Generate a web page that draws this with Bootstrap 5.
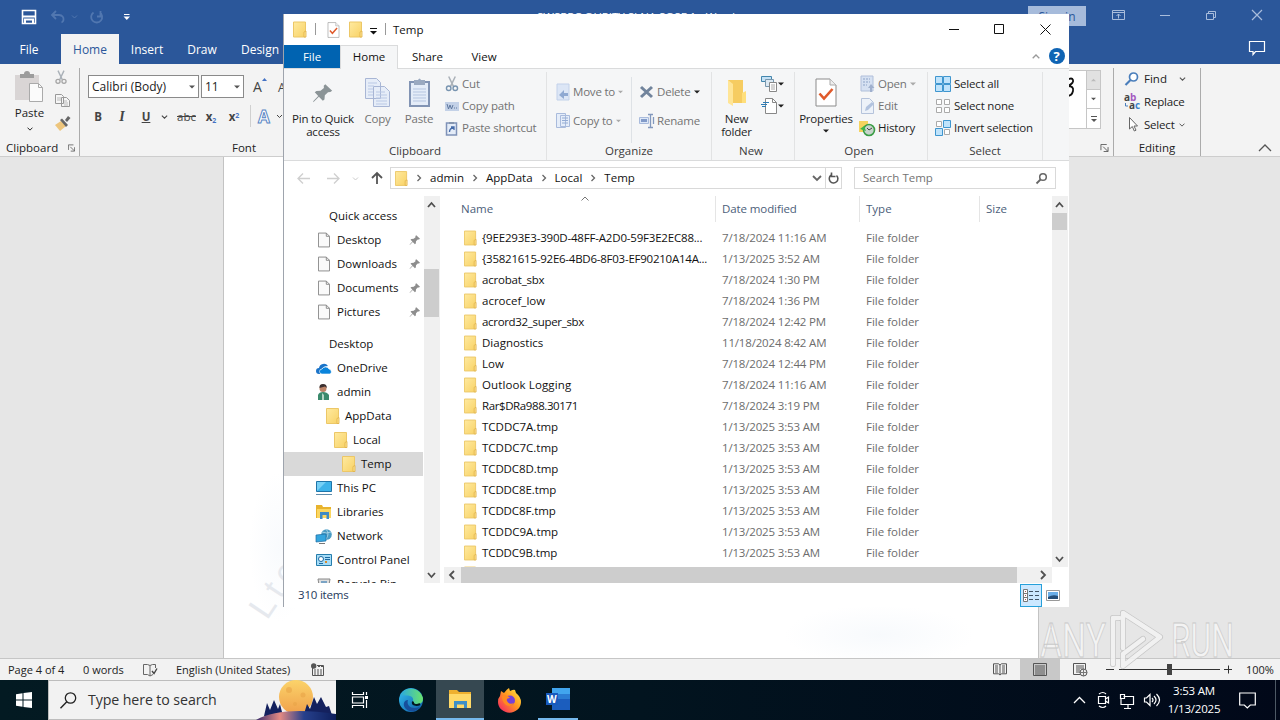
<!DOCTYPE html>
<html lang="en">
    <head>
        <meta charset="UTF-8" />
        <title>Temp</title>
        <!-- Bootstrap CSS -->
        <link href="https://cdn.jsdelivr.net/npm/bootstrap@5.3.0/dist/css/bootstrap.min.css" rel="stylesheet" />
        <style>
            body {
                width: 1280px;
                height: 720px;
                overflow: hidden;
                font: 11.5px/16px "Open Sans", "Noto Sans", sans-serif;
                color: #222;
                background: #e6e6e6;
            }
            svg { display: block; flex: none; overflow: visible; }
            .t { white-space: nowrap; }
            .screen { width: 1280px; height: 720px; }
            .line { fill: none; }
            .line:not([stroke]) { stroke: currentColor; }

            /* Word */
            .w-title { height: 34px; background: #2b579a; color: #fff; }
            .w-docname { width: 210px; margin-left: 404px; }
            .w-sign { width: 58px; height: 20px; margin-left: 281px; margin-top: -2px; background: #a6bbdb; color: #2b579a; font-size: 12px; line-height: 22px; }
            .w-tabs { height: 30px; background: #2b579a; color: #fff; font-size: 12px; }
            .w-tab { height: 30px; text-align: center; line-height: 31px; }
            .w-tab.on { background: #f3f3f3; color: #2b579a; margin-left: 3px; }
            .w-ribbon { height: 93px; background: #f3f3f3; border-bottom: 1px solid #cdcdcd; }
            .w-clip { width: 80px; height: 88px; border-right: 1px solid #ababab; margin-top: 4px; }
            .w-clip-body { height: 72px; }
            .w-font { width: 340px; padding: 7px 0 0 8px; }
            .w-input { height: 23px; border: 1px solid #8a8a8a; background: #fff; line-height: 21px; padding: 0 3px; font-size: 12px; }
            .w-fmt { height: 24px; margin-top: 7px; margin-left: -2px; color: #444; }
            .w-fmt > * { width: 24px; text-align: center; flex: none; }
            .w-fmt sub, .w-fmt sup { color: #4472c4; font-size: 7px; }
            .w-edit { width: 88px; height: 88px; border: solid #ababab; border-width: 0 1px; margin-top: 4px; }
            .w-edit .rowline { height: 23px; padding-left: 11px; gap: 4px; position: relative; top: -1px; }
            .w-scroll { width: 15px; border-left: 1px solid #c6c6c6; }
            .w-styles { width: 35px; height: 59px; margin-top: 6px; border: 1px solid #c6c6c6; background: #fff; }
            .w-scroll > div { height: 20px; border-bottom: 1px solid #c6c6c6; }
            .w-scroll > div:first-child { background: #e1e1e1; }
            .w-doc { height: 501px; background: #e6e6e6; }
            .w-page { width: 816px; margin-left: 223px; background: #fff; border: solid #c3c3c3; border-width: 0 1px; }
            .w-status { height: 22px; background: #f2f2f2; border-top: 1px solid #c6c6c6; line-height: 21px; font-size: 11px; }
            .w-view { width: 40px; height: 21px; margin-left: 13px; background: #c8c8c8; }

            /* Explorer */
            .ex { left: 284px; top: 14px; width: 785px; height: 593px; background: #fff; color: #111; box-shadow: -1px 0 0 #9ea4ad; }
            .ex-title { height: 31px; }
            .ex-tabs { height: 24px; border-bottom: 1px solid #dadbdc; line-height: 24px; }
            .ex-tabs .t { text-align: center; }
            .ex-file { width: 56px; height: 23px; background: #0063b1; color: #fff; }
            .ex-home { width: 58px; height: 24px; background: #f5f6f7; border: 1px solid #dadbdc; border-bottom: 0; line-height: 22px; }
            .ex-ribbon { height: 92px; background: #f5f6f7; border-bottom: 1px solid #dadbdc; color: #1e1e1e; }
            .grp { height: 88px; padding-top: 1px; margin-top: 3px; border-right: 1px solid #e2e3e4; flex: none; }
            .grp-body { height: 70px; letter-spacing: -.2px; }
            .grp-name { text-align: center; line-height: 16px; color: #3b3b3b; }
            .big { text-align: center; line-height: 13px; flex: none; }
            .big .ico { height: 39px; display: flex; align-items: center; justify-content: center; }
            .sm-row { height: 22px; display: flex; align-items: center; gap: 3px; }
            .org .sm-row { height: 29px; }
            .off { color: #737373; }
            .ex-addr { height: 35px; padding-top: 6px; }
            .box { height: 22px; border: 1px solid #d9d9d9; }
            .ex-body { height: 387px; }
            .side { width: 139px; padding-top: 8px; overflow: hidden; flex: none; }
            .side .node { height: 24px; display: flex; align-items: center; gap: 5px; padding-left: 32px; }
            .side .lv1 { padding-left: 42px; }
            .side .lv2 { padding-left: 50px; }
            .side .lv3 { padding-left: 58px; background: #d9d9d9; }
            .side .head { padding-left: 45px; }
            .side .pin { margin-left: auto; margin-right: 2px; }
            .vbar { background: #f0f0f0; color: #505050; width: 16px; flex: none; }
            .thumb { background: #cdcdcd; }
            .cols { height: 26px; line-height: 26px; color: #4c607a; }
            .cols > div { border-right: 1px solid #e5e5e5; flex: none; }
            .files { height: 345px; padding-top: 5px; overflow: hidden; }
            .file { height: 21px; display: flex; align-items: center; color: #6d6d6d; }
            .file .nm { width: 240px; color: #111; }
            .file .dt { width: 144px; letter-spacing: -.17px; }
            .hbar { height: 16px; background: #f0f0f0; width: 608px; color: #505050; }
            .ex-status { height: 24px; color: #1e395b; }
            .view-on { width: 22px; height: 23px; background: #cce8ff; border: 1px solid #26a0da; }

            /* Taskbar */
            .taskbar { height: 40px; background: linear-gradient(90deg, #031a22, #02141f 50%, #010819); color: #fff; }
            .search { width: 288px; height: 40px; background: #f2f2f2; border: 1px solid #bdbdbd; border-right: 0; color: #333; font-size: 14.2px; }
            .tb { width: 48px; height: 40px; margin-right: 1px; display: flex; align-items: center; justify-content: center; }
            .tb.on { background: #364851; border-bottom: 2px solid #76b9ed; }
            .tb.run { border-bottom: 2px solid #76b9ed; width: 40px; margin: 0 4px; }
            .clock { width: 66px; text-align: center; line-height: 18px; letter-spacing: -.2px; }
            .brand { left: 1036px; top: 606px; }
        </style>
    </head>
    <body>
        <!-- Icon sprite -->
        <svg width="0" height="0" class="position-absolute">
            <linearGradient id="gFold" x2="1" y2="1"><stop stop-color="#ffeaa0" /><stop offset="1" stop-color="#f8d266" /></linearGradient>
            <linearGradient id="gEdge" x2="1" y2="1"><stop stop-color="#35c1f1" /><stop offset="1" stop-color="#0c59a4" /></linearGradient>
            <linearGradient id="gEdge2" x2="1"><stop stop-color="#2aa9e0" /><stop offset="1" stop-color="#6be36d" /></linearGradient>
            <linearGradient id="gFox" x1="1" x2="0" y2="1"><stop stop-color="#fff04a" /><stop offset=".45" stop-color="#ff9a1f" /><stop offset="1" stop-color="#f5156c" /></linearGradient>
            <linearGradient id="gMoon" x2="0" y2="1"><stop stop-color="#fbd36a" /><stop offset="1" stop-color="#f0a04b" /></linearGradient>
            <linearGradient id="gHill" x2="1"><stop stop-color="#3a2d6d" /><stop offset=".3" stop-color="#e58a83" /><stop offset=".6" stop-color="#27408c" /><stop offset="1" stop-color="#0d1f5c" /></linearGradient>
            <symbol id="folder" viewBox="0 0 14 16"><path d="M.5.5h12v15H.5z" fill="url(#gFold)" stroke="#ecc767" /><path d="M11 15.500v-5l2-1v6z" fill="#ffe48f" stroke="#dfb048" stroke-width=".8" /></symbol>
            <symbol id="page" viewBox="0 0 13 16"><path d="M.5.5H9L12.500 4v11.500H.5z" fill="#fafafa" stroke="#858585" /><path d="M9 .5V4h3.500" fill="none" stroke="#858585" /></symbol>
            <symbol id="pin" viewBox="0 0 24 24"><path d="M14.500 2.500 22 9.500l-2 1.500-2.500.2-3.500 3.300-.4 4.500-1.800 1.500-4.300-4.300L2 21.500 1 22l.8-1.500 5-5.300L3 11.300l1.800-1.500 4.500-.2L13 6.500l-.2-2.300z" fill="currentColor" /></symbol>
            <symbol id="tri" viewBox="0 0 6 4"><path d="M0 .5h6L3 3.500z" fill="currentColor" /></symbol>
            <symbol id="chev" viewBox="0 0 8 5"><path d="m.7.7 3.300 3.300L7.300.7" fill="none" stroke="currentColor" stroke-width="1.300" /></symbol>
            <symbol id="launch" viewBox="0 0 9 9"><path d="M.5 7V.5H7M3 3l5 5M8.500 3.500v5h-5" fill="none" stroke="#555" /></symbol>
            <symbol id="cut" viewBox="0 0 14 17"><path d="m3.500.5 5 10.500M10.500.5l-5 10.500" fill="none" stroke="#aab1b8" stroke-width="1.600" /><circle cx="3.500" cy="13" r="2.400" fill="none" stroke="currentColor" stroke-width="1.500" /><circle cx="10.500" cy="13" r="2.400" fill="none" stroke="currentColor" stroke-width="1.500" /></symbol>
            <symbol id="check" viewBox="0 0 22 29"><path d="M1 1h14l6 6v21H1z" fill="#fff" stroke="#8b8b8b" /><path d="M15 1v6h6" fill="#eee" stroke="#aaa" /><path d="m4.500 15.500 4.500 5 8.500-9.500" fill="none" stroke="#e05a2b" stroke-width="2.600" /></symbol>
        </svg>

        <div class="screen d-flex flex-column position-relative">
            <!-- Word title bar -->
            <div class="w-title d-flex align-items-center">
                <svg width="133" height="34">
                    <path d="M22.500 10.500h13v13h-13z" fill="none" stroke="#fff" stroke-width="1.600" /><path d="M22 16.500h14M25 24v-4.500h8V24" fill="none" stroke="#fff" stroke-width="2" />
                    <g fill="none" stroke="#5177b0" stroke-width="1.800"><path d="m56 11-4 4 4 4M52.500 15H59q5 .5 4.500 5-.5 2-2 2.500" /><path d="M99.500 12.300a5.500 5.500 0 1 1-6 .2M97 16.500h3.500V11" /></g>
                    <path d="m72 15.500 2.500 2.500 2.500-2.500" fill="none" stroke="#5177b0" />
                    <path d="M124 14.500h5.500" stroke="#fff" /><path d="M123.500 16.500h6.500l-3.200 3.500z" fill="#fff" />
                </svg>
                <span class="w-docname t">SWSRPC QUPITY SI NA SOSF 1 - Word</span>
                <div class="w-sign t text-center">Sign in</div>
                <svg width="194" height="34" fill="none" stroke="#a9bddc">
                    <path d="M26.500 10.500h12v9h-12zM26.500 12.500h12M32.500 18.500v-4.500m-2 2 2-2 2 2" /><path d="M74 15.500h10M120.500 13.500h7v6h-7zM122.500 13.500v-2h7v6h-2" /><path d="m166 10 10 10m0-10-10 10" stroke-width="1.200" />
                </svg>
            </div>
            <div class="w-tabs d-flex">
                <div class="w-tab t" style="width: 58px">File</div>
                <div class="w-tab t on" style="width: 58px">Home</div>
                <div class="w-tab t" style="width: 56px">Insert</div>
                <div class="w-tab t" style="width: 54px">Draw</div>
                <div class="w-tab t" style="width: 62px">Design</div>
                <svg class="ms-auto mt-1" width="31" height="20"><path d="M.5 3.500h15v10h-9L4 16.500v-3H.5z" fill="none" stroke="#fff" stroke-width="1.200" /></svg>
            </div>
            <div class="w-ribbon d-flex">
                <div class="w-clip">
                    <div class="w-clip-body d-flex">
                        <div class="d-flex flex-column align-items-center" style="width: 51px">
                            <svg class="ms-2 mt-1" width="30" height="31"><path d="M0 3h24v25H0z" fill="#d9d5d5" /><path d="M5 6V2h4a3 3 0 0 1 6 0h4v4z" fill="#9c9c9c" /><path d="M14.500 11.500h9l4 4v14h-13z" fill="#fbfbfb" stroke="#aaa" /><path d="M23.500 11.500v4h4" fill="none" stroke="#aaa" /></svg>
                            <span class="t ms-2" style="line-height: 20px">Paste</span>
                            <svg class="ms-2 mt-1" width="6" height="4"><use href="#chev" /></svg>
                        </div>
                        <div class="ms-1" style="padding-top: 2px">
                            <svg width="12" height="15" color="#a5a5a5"><use href="#cut" /></svg>
                            <svg width="16" height="15" class="mt-2"><path d="M.5 1.500h6l2 2v7h-8zM6.500 4.500h5l3 3v6h-8z" fill="#f6f6f6" stroke="#999" /><path d="M2 5h4M2 7h4M9 8h3M9 10h4M9 12h4" stroke="#bbb" /></svg>
                            <svg width="16" height="15" class="mt-2"><path d="m0 9 6-4 5 5-6 5z" fill="#edc57c" /><path d="m5 4 2-1.500L13 9l-2 2zM10 4l3-4 2.500 2L12 6z" fill="#666" /></svg>
                        </div>
                    </div>
                    <div class="d-flex align-items-center"><span class="t flex-grow-1" style="padding-left: 6px">Clipboard</span><svg class="me-1" width="7" height="8"><use href="#launch" /></svg></div>
                </div>
                <div class="w-font">
                    <div class="d-flex mt-1" style="gap: 2px">
                        <div class="w-input t d-flex align-items-center" style="width: 111px">Calibri (Body)<svg class="ms-auto" width="6" height="4" color="#555"><use href="#tri" /></svg></div>
                        <div class="w-input t d-flex align-items-center" style="width: 43px">11<svg class="ms-auto" width="6" height="4" color="#555"><use href="#tri" /></svg></div>
                        <svg width="40" height="23"><text x="7" y="17" font-size="14" fill="#444">A</text><text x="32" y="17" font-size="12" fill="#444">A</text><path d="m16 6 2.500-3L21 6z" fill="#4472c4" /></svg>
                    </div>
                    <div class="w-fmt d-flex align-items-center">
                        <b>B</b><i style="font-family: 'Liberation Serif'; font-weight: bold; font-size: 14px">I</i><b class="text-decoration-underline">U</b>
                        <svg width="6" height="4" style="width: 13px"><use href="#chev" /></svg>
                        <s style="width: 31px">abc</s><b style="width: 18px">x<sub>2</sub></b><b style="width: 28px">x<sup>2</sup></b>
                        <svg width="50" height="24"><path d="M2.500 0v22" stroke="#d0d0d0" /><text x="10" y="18" font-size="17" fill="#fff" stroke="#5a86c5" font-weight="bold">A</text><path d="m29 10 2.500 2.500L34 10" class="line" /></svg>
                    </div>
                    <div class="t" style="margin: 11px 0 0 144px">Font</div>
                </div>
                <div class="d-flex ms-auto">
                    <div class="w-styles d-flex">
                        <svg width="19" height="57"><path d="M0 9q5-3 6 0t-5 6q6 0 5 5-1 5-6 5" fill="none" stroke="#111" stroke-width="1.800" /></svg>
                        <div class="w-scroll flex-fill d-flex flex-column">
                            <div class="d-flex align-items-center justify-content-center"><svg width="5" height="4" color="#bbb" style="transform: rotate(180deg)"><use href="#tri" /></svg></div>
                            <div class="d-flex align-items-center justify-content-center"><svg width="5" height="4" color="#555"><use href="#tri" /></svg></div>
                            <div class="d-flex flex-column align-items-center justify-content-center border-0"><svg width="6" height="6" color="#555"><path d="M0 .5h6" class="line" /><path d="M0 3h6L3 6z" fill="#555" /></svg></div>
                        </div>
                    </div>
                    <svg class="align-self-end mb-1" width="9" height="8" style="margin-left: -1px"><use href="#launch" /></svg>
                    <div class="w-edit ms-1">
                        <div class="rowline d-flex align-items-center"><svg width="15" height="14"><circle cx="8.500" cy="5" r="4" fill="#fff" stroke="#4a7ebb" stroke-width="1.700" /><path d="m5.500 8-5 5" stroke="#4a7ebb" stroke-width="2.200" /></svg><span class="t">Find</span><svg class="ms-2" width="7" height="4" color="#555"><use href="#chev" /></svg></div>
                        <div class="rowline d-flex align-items-center"><svg width="15" height="15"><text x="-1" y="7" font-size="10" font-weight="bold" fill="#444">a<tspan fill="#a45bc0">b</tspan></text><text x="4" y="15" font-size="10" font-weight="bold" fill="#444">a<tspan fill="#3d83cc">c</tspan></text><path d="M.5 9v3H3" class="line" stroke="#4a7ebb" /></svg><span class="t" style="letter-spacing: -.2px">Replace</span></div>
                        <div class="rowline d-flex align-items-center"><svg width="15" height="15"><path d="M4.500.5v11.500l2.800-2.500 2 4.500 1.700-.8-2-4.200h3.500z" fill="#fff" stroke="#666" /></svg><span class="t" style="letter-spacing: -.2px">Select</span><svg width="6" height="4" color="#555"><use href="#chev" /></svg></div>
                        <div class="text-center" style="padding-top: 3px">Editing</div>
                    </div>
                    <div class="d-flex align-items-end justify-content-end" style="width: 79px; padding: 0 8px 4px 0"><svg width="14" height="8"><path d="m1 7 6-6 6 6" class="line" stroke="#555" stroke-width="1.300" /></svg></div>
                </div>
            </div>
            <div class="w-doc d-flex">
                <div class="w-page">
                    <svg width="814" height="501">
                        <defs><radialGradient id="haze"><stop stop-color="#e9f0f8" /><stop offset="1" stop-color="#fff" /></radialGradient></defs>
                        <ellipse cx="55" cy="390" rx="30" ry="75" fill="url(#haze)" opacity=".3" /><ellipse cx="655" cy="478" rx="95" ry="30" fill="url(#haze)" opacity=".35" />
                        <text transform="translate(43 464) rotate(-56)" font-family="Liberation Sans" font-size="35" letter-spacing="6" fill="#e6e9ee">Lte</text>
                    </svg>
                </div>
            </div>
            <div class="w-status d-flex align-items-center">
                <span class="t" style="width: 75px; padding-left: 8px">Page 4 of 4</span><span class="t ps-2" style="width: 68px">0 words</span>
                <svg width="15" height="14"><path d="M.5 1.500h4l2.500 1 2.500-1h3V5M.5 1.500v10h4l2.500 1.500V2.500M7 13l3-1.500" class="line" stroke="#666" /><path d="m9 8 2 2.500 3-5" class="line" stroke="#444" stroke-width="1.400" /></svg>
                <span class="t" style="margin-left: 18px; width: 135px">English (United States)</span>
                <svg width="14" height="14"><path d="M1.500 5v7.500h11V2.500H6" class="line" stroke="#555" /><path d="M7 3.500h5M3 7h9M3 9h9M3 11h9" stroke="#555" stroke-dasharray="2 1" /><circle cx="2.700" cy="3" r="2.700" fill="#555" /></svg>
                <div class="d-flex align-items-center h-100" style="margin-left: 668px">
                    <svg width="14" height="13"><path d="M7 2 5.500.8H.5v10h5L7 12l1.500-1.200h5v-10h-5zM7 2v10M2 3h3M2 5h3M2 7h3M9 3h3M9 5h3M9 7h3M2 9h3M9 9h3" class="line" stroke="#555" /></svg>
                    <div class="w-view d-flex align-items-center justify-content-center"><svg width="14" height="13"><path d="M.5.5h13v12H.5zM2 3h10M2 5h10M2 7h10M2 9h10M2 11h10" class="line" stroke="#555" /></svg></div>
                    <svg style="margin-left: 13px" width="16" height="14"><path d="M12.500 6V.5H.5v11H7M3 3h8M3 5h8M3 7h4M3 9h4" class="line" stroke="#555" /><circle cx="10.500" cy="9.500" r="3.500" fill="#eee" stroke="#555" /><path d="M7 9.500h7M10.500 6v7" stroke="#777" /></svg>
                    <svg style="margin-left: 17px" width="126" height="13"><path d="M0 6.500h8M13 6.500h101M118 6.500h8M122.500 2.500v8" class="line" stroke="#333" /><path d="M61 1h5v11h-5z" fill="#444" /></svg>
                    <span class="t" style="margin-left: 14px">100%</span>
                </div>
            </div>

            <!-- Taskbar -->
            <div class="taskbar d-flex">
                <div class="tb m-0"><svg width="16" height="16"><path d="m0 2.200 6.500-.9v6.200H0zM7.500 1.100 16 0v7.500H7.500zM0 8.500h6.500v6.200L0 13.800zM7.500 8.500H16V16l-8.500-1.100z" fill="#fff" /></svg></div>
                <div class="search d-flex align-items-center">
                    <svg style="margin-left: 11px" width="17" height="17"><circle cx="10.500" cy="6" r="5.200" class="line" stroke="#222" stroke-width="1.300" /><path d="M6.800 9.700.5 16.200" stroke="#222" stroke-width="1.400" /></svg>
                    <span class="t" style="margin-left: 11px; letter-spacing: -.1px">Type here to search</span>
                    <svg class="ms-auto" width="80" height="38">
                        <circle cx="40" cy="16" r="17" fill="url(#gMoon)" /><g fill="#e9a548" opacity=".6"><circle cx="33" cy="9" r="3" /><circle cx="47" cy="14" r="2.500" /><circle cx="39" cy="23" r="2" /></g>
                        <path d="m8 35 3-13 3 7 4-10 4 9 2-5 3 12zM48 33l3-10 3 5 4-12 3 7 4-7 5 10 3-1 3 9z" fill="#14215e" />
                        <path d="M0 39q25-14 80-6v6z" fill="url(#gHill)" />
                    </svg>
                </div>
                <div class="tb"><svg width="16" height="16"><path d="M.5 0v2.500h11V0M.5 5h11v6H.5zM.5 16v-2.500h11V16M14.500 0v3M14.500 8v8" class="line" stroke-width="1.200" /><path d="M13 4h3v3h-3z" fill="#fff" /></svg></div>
                <div class="tb m-0" style="width: 51px"><svg width="24" height="24"><circle cx="12" cy="12" r="12" fill="url(#gEdge)" /><path d="M1 8C4-1 20-3 24 10q.5 6-7 6.500-4 0-3-3c1-4-2-6-6-6Q3 7 1 8z" fill="url(#gEdge2)" /><path d="M9 12c-2 6 4 10 12 7-4 5-10 6-14 2s-2-9 2-9z" fill="#174f9b" /><path d="M14 13.500c-1 3 3 4.500 7 2.500" fill="none" stroke="#021720" stroke-width="2" /></svg></div>
                <div class="tb on"><svg width="22" height="19"><path d="M0 0h8l2 2h12v16H0z" fill="#eeb02f" /><path d="M0 4h22v14H0z" fill="#ffd968" /><path d="M5 18v-7h13v7h-3v-3.500H8V18z" fill="#3e8fc7" /></svg></div>
                <div class="tb"><svg width="23" height="24"><path d="M2 8 3 3l3 2q3-4 5-5l1 3q4-2 5-1l1 3q5 4 5 9a11.300 10.500 0 0 1-23 0q0-4 2-6z" fill="url(#gFox)" /><circle cx="12" cy="12.500" r="5" fill="#7542d8" /><path d="M4 8q5-2 8 2-4 0-3 3 2 4 7 2-3 5-8 2-4-3-4-9z" fill="#ff8a20" /></svg></div>
                <div class="tb run"><svg width="24" height="22"><path d="M6 0h18v22H6z" fill="#1b5dbe" /><path d="M6 0h18v6H6z" fill="#41a5ee" /><path d="M6 6h18v5H6z" fill="#2b7cd3" /><path d="M0 5h12v12H0z" fill="#185abd" /><text x="1" y="14.500" fill="#fff" font-size="10" font-weight="bold">W</text></svg></div>
                <div class="d-flex align-items-center ms-auto">
                    <svg width="88" height="20" fill="none" stroke="#fff"><path d="m1 13 5.500-5.500L12 13" stroke-width="1.300" /><path d="M25.500 6.500h7v7h-7zM32.500 9l3-2v6l-3-2M26 4q4-3 7 0M26 16q4 3 7 0" stroke-width="1.200" /><path d="M50.500 6.500h10v8h-12M55 15v3M51 18.500h7M47.500 4.500h4v4h-4zM48 9v6" stroke-width="1.200" /><path d="M71.500 8h2l3.500-3.500v11L73.500 12h-2zM79 8q2 2 0 4M81 6q4 4 0 8M83.500 4q6 6 0 12" stroke-width="1.200" /></svg>
                    <div class="clock t">3:53 AM<br />1/13/2025</div>
                    <svg style="margin: 0 18px 0 12px" width="17" height="17"><path d="M.7 1h15.600v12h-5l-3 3-3-3H.7z" class="line" stroke-width="1.200" /></svg>
                    <svg width="6" height="40"><path d="M1.500 0v40" stroke="#4d5965" /></svg>
                </div>
            </div>

            <!-- Explorer window -->
            <div class="ex position-absolute d-flex flex-column">
                <div class="ex-title d-flex align-items-center">
                    <svg width="105" height="31"><use href="#folder" x="9" y="7" width="14" height="17" /><path d="M31.500 9v12M101.500 9v12" stroke="#999" /><use href="#check" x="43" y="8" width="13" height="16" /><use href="#folder" x="65" y="7" width="14" height="17" /><path d="M86 14.500h7" stroke="#111" /><path d="M86 17h7l-3.500 3.500z" fill="#111" /></svg>
                    <span class="t ms-1">Temp</span>
                    <svg class="ms-auto" width="122" height="31" fill="none" stroke="#111"><path d="M2 15.500h10M47.500 10.500h9v9h-9zM93.500 10.500l10 10m0-10-10 10" /></svg>
                </div>
                <div class="ex-tabs d-flex">
                    <div class="ex-file t">File</div><div class="ex-home t">Home</div><div class="t" style="width: 59px">Share</div><div class="t" style="width: 54px">View</div>
                    <div class="ms-auto d-flex align-items-center" style="margin-right: 4px"><svg width="8" height="5" color="#999" style="transform: rotate(180deg)"><use href="#chev" /></svg><svg class="ms-2" width="17" height="17"><circle cx="9" cy="8" r="8" fill="#0f64b4" /><text x="5.500" y="13" fill="#fff" font-size="13" font-weight="bold">?</text></svg></div>
                </div>
                <div class="ex-ribbon d-flex">
                    <div class="grp" style="width: 263px">
                        <div class="grp-body d-flex">
                            <div class="big" style="width: 78px"><div class="ico"><svg width="22" height="22" color="#8b9497"><use href="#pin" /></svg></div>Pin to Quick<br />access</div>
                            <div class="big off" style="width: 31px"><div class="ico"><svg width="25" height="29"><path d="M.5.5h11l4 4v16H.5zM8.500 8.500h11l5 5v15h-16z" fill="#e6edf8" stroke="#a8b6d5" /><path d="M3 5h9M3 8h6M3 11h5M3 14h5M3 17h5M11 14h9M11 17h11M11 20h11M11 23h11M11 26h11" stroke="#bac9e5" /></svg></div>Copy</div>
                            <div class="big off" style="width: 52px"><div class="ico"><svg width="21" height="29"><path d="M1 4h19v24H1z" fill="#e4ecf8" stroke="#8294b4" stroke-width="2" /><path d="M5 2h4q1.500-3 3 0h4v5H5z" fill="#9aa9c0" /><path d="M4 11h13M4 14h13M4 17h13M4 20h13M4 23h13" stroke="#b5c5e0" /></svg></div>Paste</div>
                            <div class="off ms-auto" style="width: 101px">
                                <div class="sm-row"><svg width="14" height="16" color="#7894b0"><use href="#cut" /></svg><span class="t">Cut</span></div>
                                <div class="sm-row"><svg width="14" height="9"><path d="M0 0h14v9H0z" fill="#c3d1e7" /><path d="m2 2 1.500 5L5 3l1.500 4L8 3M9 6h1m1 0h1" class="line" stroke="#5f789f" /></svg><span class="t">Copy path</span></div>
                                <div class="sm-row"><svg width="14" height="15"><path d="M1.500 2h10v12h-10z" fill="#e4ecf8" stroke="#7f92b8" stroke-width="1.500" /><path d="M4 1h5v2H4z" fill="#8595ae" /><path d="M4.500 11q0-4 4-4M6 6h3v3" class="line" stroke="#456ba9" stroke-width="1.300" /></svg><span class="t">Paste shortcut</span></div>
                            </div>
                        </div>
                        <div class="grp-name">Clipboard</div>
                    </div>
                    <div class="grp org" style="width: 165px">
                        <div class="grp-body d-flex off pt-1">
                            <div class="flex-shrink-0" style="width: 84px; padding-left: 9px">
                                <div class="sm-row"><svg width="14" height="16"><path d="M1 0h12v16H1z" fill="#dce6f6" stroke="#c2d1ea" /><path d="M12 9H8V6l-5 5 5 4v-3h4z" fill="#8fa9d2" /></svg><span class="t">Move to</span><svg width="5" height="4" color="#aaa"><use href="#tri" /></svg></div>
                                <div class="sm-row"><svg width="14" height="16"><path d="M.5.5h9v14h-9zM4.500 2.500h9v11h-9z" fill="#e5edf9" stroke="#a9bbdc" /><path d="M6 5h6M6 7.500h6M6 10h6" stroke="#94acd4" /></svg><span class="t">Copy to</span><svg width="5" height="4" color="#aaa"><use href="#tri" /></svg></div>
                            </div>
                            <div class="border-start" style="padding-left: 7px">
                                <div class="sm-row"><svg width="15" height="14"><path d="m2 2 11 10M13 2 2 12" stroke="#71849c" stroke-width="3" /></svg><span class="t">Delete</span><svg width="6" height="4" color="#222"><use href="#tri" /></svg></div>
                                <div class="sm-row"><svg width="15" height="14"><path d="M.5 3.500h9v6h-9z" fill="#dce7f7" stroke="#a9bbdc" /><path d="M2 6.500h6" stroke="#829bc9" stroke-width="3" /><path d="M9 .5h5M11.500 1v12M9 13.500h5M14.500 3v7" class="line" stroke="#8298bd" stroke-width="1.300" /></svg><span class="t">Rename</span></div>
                            </div>
                        </div>
                        <div class="grp-name">Organize</div>
                    </div>
                    <div class="grp" style="width: 83px">
                        <div class="grp-body d-flex">
                            <div class="big" style="width: 49px"><div class="ico"><svg width="20" height="27"><path d="M1 1h15v23H1z" fill="#f6cc61" /><path d="m1 1 5 4v22l-5-3z" fill="#ffe596" /><path d="M15 24V14l4-2v12z" fill="#ffdf7b" /></svg></div>New<br />folder</div>
                            <div>
                                <div class="sm-row gap-0"><svg width="17" height="16"><path d="M.5.5h10v5H.5z" fill="#c5e1f5" stroke="#4386ad" /><path d="M4.500 3.500h8v7h-8z" fill="#dce9f3" stroke="#7897ad" /><path d="M8.500 6.500h7v9h-7z" fill="#fff" stroke="#888" /><path d="M10 9h4M10 11h4M10 13h4" stroke="#aaa" /></svg><svg width="6" height="4"><use href="#tri" /></svg></div>
                                <div class="sm-row gap-0"><svg width="17" height="16"><path d="M4.500.5h7l4 4v11h-11z" fill="#fff" stroke="#888" /><path d="M11.500.5v4h4" fill="none" stroke="#888" /><path d="M2 4.500h6M0 6.500h6M1 8.500h4" stroke="#2d7cb5" /></svg><svg width="6" height="4"><use href="#tri" /></svg></div>
                            </div>
                        </div>
                        <div class="grp-name pe-1">New</div>
                    </div>
                    <div class="grp" style="width: 133px">
                        <div class="grp-body d-flex">
                            <div class="big" style="width: 62px"><div class="ico"><svg width="22" height="29"><use href="#check" /></svg></div>Properties<svg class="mx-auto mt-1" width="6" height="4"><use href="#tri" /></svg></div>
                            <div style="padding-left: 3px">
                                <div class="sm-row off"><svg width="15" height="16"><path d="M1 0h12v15H1z" fill="#d6e1f2" stroke="#b0bfda" /><path d="M3 3h7M3 6h7M3 9h4" stroke="#8da3c7" stroke-dasharray="2 1" /><path d="m11 8 3.500 4H12v4h-2v-4H8z" fill="#a0b0cd" /></svg><span class="t">Open</span><svg width="6" height="4" color="#aaa"><use href="#tri" /></svg></div>
                                <div class="sm-row off"><svg width="15" height="16"><path d="M1.500.5h8l4 4v11h-12z" fill="#edf2f9" stroke="#b5c3db" /><path d="m5 13 1-4 6-5 2 2-6 6z" fill="#b2c3df" /></svg><span class="t">Edit</span></div>
                                <div class="sm-row"><svg width="15" height="16"><path d="M-1 1H8v11h-9z" fill="#f4d35e" /><circle cx="9" cy="10" r="5.500" fill="#c7d4cc" stroke="#3b9d46" stroke-width="1.600" /><path d="m7 8 2 2 3-2" class="line" stroke="#444" /><path d="m0 9 4-3 2 5z" fill="#3cb54a" /></svg><span class="t">History</span></div>
                            </div>
                        </div>
                        <div class="grp-name pe-1">Open</div>
                    </div>
                    <div class="grp" style="width: 115px">
                        <div class="grp-body" style="padding-left: 7px">
                            <div class="sm-row"><svg width="16" height="16" fill="#bfe3fb" stroke="#3f96cf"><path d="M.5.5h7v7h-7zM8.500.5h7v7h-7zM.5 8.500h7v7h-7zM8.500 8.500h7v7h-7z" /></svg><span class="t">Select all</span></div>
                            <div class="sm-row"><svg width="16" height="16" fill="#fff" stroke="#aaa"><path d="M1.500 1.500h5v5h-5zM9.500 1.500h5v5h-5zM1.500 9.500h5v5h-5zM9.500 9.500h5v5h-5z" /></svg><span class="t">Select none</span></div>
                            <div class="sm-row"><svg width="16" height="16"><path d="M1.500 1.500h5v5h-5zM9.500 9.500h5v5h-5z" fill="#fff" stroke="#aaa" /><path d="M8.500.5h7v7h-7zM.5 8.500h7v7h-7z" fill="#bfe3fb" stroke="#3f96cf" /></svg><span class="t">Invert selection</span></div>
                        </div>
                        <div class="grp-name">Select</div>
                    </div>
                </div>
                <div class="ex-addr d-flex">
                    <svg width="106" height="22"><path d="M14 11.500h12M19 6.500l-5 5 5 5M43 11.500h12M50 6.500l5 5-5 5" class="line" stroke="#cfcfcf" stroke-width="1.300" /><path d="m69 10.500 2.500 2.500 2.500-2.500" class="line" stroke="#ccc" /><path d="M93 17V6M88 11l5-5 5 5" class="line" stroke="#555" stroke-width="1.800" /></svg>
                    <div class="box d-flex align-items-center" style="width: 452px" id="crumbs">
                        <svg class="ms-1" width="13" height="17"><use href="#folder" /></svg>
                    </div>
                    <div class="box d-flex align-items-center off" style="width: 202px; margin-left: 12px"><span class="t ms-2">Search Temp</span><svg class="ms-auto me-2" width="11" height="11"><circle cx="7" cy="4" r="3.300" class="line" stroke="#666" stroke-width="1.500" /><path d="M4.500 6.500.5 10.500" stroke="#666" stroke-width="1.800" /></svg></div>
                </div>
                <div class="ex-body d-flex">
                    <div class="side" id="side"></div>
                    <div class="vbar d-flex flex-column align-items-center" style="margin-left: 1px">
                        <svg width="16" height="73"><path d="m4 11 3.500-4 3.500 4" class="line" stroke-width="1.800" /></svg>
                        <div class="thumb align-self-start" style="height: 48px; width: 15px"></div>
                        <svg class="mt-auto" width="16" height="16"><path d="m4 6 3.500 4L11 6" class="line" stroke-width="1.800" /></svg>
                    </div>
                    <div class="d-flex flex-column" style="margin-left: 4px; width: 608px">
                        <div class="cols d-flex">
                            <div class="d-flex" style="width: 272px; padding-left: 17px">Name<svg style="margin-left: 88px" width="8" height="8"><path d="m.5 4.500 3.500-3.500L7.500 4.500" class="line" stroke="#777" /></svg></div>
                            <div style="width: 144px; padding-left: 6px; letter-spacing: -.1px">Date modified</div>
                            <div style="width: 120px; padding-left: 6px">Type</div>
                            <div class="border-0" style="padding-left: 6px">Size</div>
                        </div>
                        <div class="files" id="files"></div>
                        <div class="hbar d-flex align-items-center">
                            <svg width="17" height="16"><path d="m10 4-4 4 4 4" class="line" stroke-width="1.800" /></svg><div class="thumb h-100" style="width: 556px"></div><svg class="ms-auto" width="17" height="16"><path d="m6 4 4 4-4 4" class="line" stroke-width="1.800" /></svg>
                        </div>
                    </div>
                    <div class="vbar d-flex flex-column" style="height: 371px">
                        <svg width="16" height="17"><path d="m4 11 3.500-4 3.500 4" class="line" stroke-width="1.800" /></svg>
                        <div class="thumb" style="height: 17px; width: 15px"></div>
                        <svg class="mt-auto" width="16" height="16"><path d="m4 6 3.500 4L11 6" class="line" stroke-width="1.800" /></svg>
                    </div>
                </div>
                <div class="ex-status d-flex align-items-center">
                    <span class="t flex-grow-1" style="padding-left: 14px; letter-spacing: -.2px">310 items</span>
                    <div class="view-on d-flex align-items-center justify-content-center"><svg width="16" height="13"><path d="M.5.5h4v12h-4zM.5 4.500h4M.5 8.500h4" fill="#fff" stroke="#777" /><path d="M2 2.500h1M2 6.500h1M2 10.500h1" stroke="#a55" /><path d="M6 2.500h4M12 2.500h4M6 6.500h4M12 6.500h4M6 10.500h4M12 10.500h4" stroke="#456" /></svg></div>
                    <svg class="ms-1" style="margin-right: 9px" width="14" height="11"><path d="M.5.5h13v10H.5z" fill="#fff" stroke="#999" /><path d="M2 2h10v7H2z" fill="#6aaee8" /><path d="M2 7q5-3 10-1v3H2z" fill="#254e78" /></svg>
                </div>
            </div>

            <!-- Watermark -->
            <svg class="brand position-absolute" width="200" height="68" opacity=".85">
                <g font-family="Roboto" font-weight="400" font-size="48" fill="#f6f6f6" stroke="#c4c4c4" stroke-width=".8">
                    <text x="4" y="51" textLength="66" lengthAdjust="spacingAndGlyphs">ANY</text>
                    <text x="135" y="51" textLength="63" lengthAdjust="spacingAndGlyphs">RUN</text>
                </g>
                <g fill="none" stroke-linejoin="round" stroke-linecap="round"><path d="M87 42V7l37 24-37 29V48l20-15M77 13v45M83 12h-6" stroke="#c0c0c0" stroke-width="6" /><path d="M87 42V7l37 24-37 29V48l20-15M77 13v45M83 12h-6" stroke="#f4f4f4" stroke-width="4.500" /></g>
            </svg>
        </div>

        <!-- Bootstrap JS -->
        <script src="https://cdn.jsdelivr.net/npm/bootstrap@5.3.0/dist/js/bootstrap.bundle.min.js"></script>

        <!-- Main Script -->
        <script>
            // name, date, letter spacing of the name
            const files = [
                ["{9EE293E3-390D-48FF-A2D0-59F3E2EC88...", "7/18/2024 11:16 AM", -0.19],
                ["{35821615-92E6-4BD6-8F03-EF90210A14A...", "1/13/2025 3:52 AM", -0.24],
                ["acrobat_sbx", "7/18/2024 1:30 PM", -0.2],
                ["acrocef_low", "7/18/2024 1:36 PM", 0],
                ["acrord32_super_sbx", "7/18/2024 12:42 PM", -0.32],
                ["Diagnostics", "11/18/2024 8:42 AM", 0],
                ["Low", "7/18/2024 12:44 PM", 0],
                ["Outlook Logging", "7/18/2024 11:16 AM", 0.12],
                ["Rar$DRa988.30171", "7/18/2024 3:19 PM", -0.4],
                ["TCDDC7A.tmp", "1/13/2025 3:53 AM", 0],
                ["TCDDC7C.tmp", "1/13/2025 3:53 AM", 0],
                ["TCDDC8D.tmp", "1/13/2025 3:53 AM", -0.1],
                ["TCDDC8E.tmp", "1/13/2025 3:53 AM", -0.1],
                ["TCDDC8F.tmp", "1/13/2025 3:53 AM", -0.1],
                ["TCDDC9A.tmp", "1/13/2025 3:53 AM", 0],
                ["TCDDC9B.tmp", "1/13/2025 3:53 AM", -0.1],
                null,
            ];

            const icons = {
                folder: '<svg width="14" height="16"><use href="#folder" /></svg>',
                page: '<svg width="16" height="16"><use href="#page" x="2" width="12" height="16" /></svg>',
                cloud: '<svg width="16" height="11"><path d="M3 11a3 3 0 0 1 0-6 5 5 0 0 1 9-2Q5 3 4 11z" fill="#1b74c9" /><path d="M6 11a2.500 2.500 0 0 1 0-5 4 4 0 0 1 7 0 2.700 2.700 0 0 1 1 5z" fill="#0a84dc" stroke="#fff" stroke-width=".6" /></svg>',
                user: '<svg width="16" height="16"><path d="M2 16V11q1-3 5-3t6 3v5z" fill="#3b8a6c" /><circle cx="7" cy="4.500" r="3.500" fill="#bd8468" /><path d="M3.500 4Q3 0 7 0t3.800 4L9 2.500z" fill="#3b3030" /><path d="m6 9 2 2v5H6z" fill="#b5d6c5" /></svg>',
                pc: '<svg width="16" height="14"><path d="M.5.5h15v10H.5z" fill="#3eb3ea" stroke="#1f74a8" /><path d="M1 10 10 1H1z" fill="#76d0f6" /><path d="M0 13.500h16" stroke="#5f8cab" /></svg>',
                lib: '<svg width="16" height="14"><path d="M0 0h6l1 2h8v11H0z" fill="#e8b32d" /><path d="M1 4h14v9H1z" fill="#fbd661" /><path d="M4 14V7h9v7h-2.500v-4h-4v4z" fill="#3f8ac4" /></svg>',
                net: '<svg width="16" height="15"><circle cx="10.500" cy="5.500" r="5.300" fill="#4b9cc4" /><path d="M6 3q4 2 9 0M10 0q4 5 0 10" fill="none" stroke="#a3d1e5" /><path d="m0 6 10-1v7l-10 1z" fill="#34a5de" stroke="#1d6ca0" stroke-width=".7" /><path d="M3 14.500h6" stroke="#777" /></svg>',
                panel: '<svg width="16" height="12"><path d="M.5.5h15v11H.5z" fill="#a6dcf7" stroke="#267dac" /><circle cx="5" cy="5" r="2.500" fill="#fff" stroke="#1c69a0" /><path d="M9 3.500h5M9 5.500h5M3 9.500h4" stroke="#1c69a0" /><path d="M9 7h2v2H9z" fill="#d98b2e" /></svg>',
                bin: '<svg width="16" height="13"><path d="M2 1h12l-2 12H4z" fill="#ddd" stroke="#888" /><path d="M5 3h6v5H5z" fill="#7aa3c4" /></svg>',
            };

            const nodes = [
                ["Quick access", "", "head"],
                ["Desktop", "page", "pinned"],
                ["Downloads", "page", "pinned"],
                ["Documents", "page", "pinned"],
                ["Pictures", "page", "pinned"],
                ["Desktop", "", "head mt-2"],
                ["OneDrive", "cloud", ""],
                ["admin", "user", ""],
                ["AppData", "folder", "lv1"],
                ["Local", "folder", "lv2"],
                ["Temp", "folder", "lv3"],
                ["This PC", "pc", ""],
                ["Libraries", "lib", ""],
                ["Network", "net", ""],
                ["Control Panel", "panel", ""],
                ["Recycle Bin", "bin", ""],
            ];

            document.getElementById("files").innerHTML = files
                .map((f) => {
                    const text = f
                        ? `<span class="nm t" style="letter-spacing: ${f[2]}px">${f[0]}</span><span class="dt t">${f[1]}</span><span class="t">File folder</span>`
                        : "";
                    return `<div class="file"><svg style="margin: 0 4px 0 20px" width="13" height="16"><use href="#folder" /></svg><i class="pe-none" style="width: 1px"></i>${text}</div>`;
                })
                .join("");

            document.getElementById("side").innerHTML = nodes
                .map(([name, icon, cls]) => {
                    const pin = cls === "pinned" ? '<svg class="pin" width="12" height="12" color="#8d8d8d"><use href="#pin" /></svg>' : "";
                    return `<div class="node ${cls}">${icons[icon] || ""}<span class="t">${name}</span>${pin}</div>`;
                })
                .join("");

            // Breadcrumbs, then the drop arrow and refresh button
            const arrow = '<svg style="margin: 0 9px" width="4" height="8"><path d="m.5 1 3 3-3 3" fill="none" stroke="#666" stroke-width="1.300" /></svg>';
            document.getElementById("crumbs").innerHTML +=
                ["admin", "AppData", "Local", "Temp"].map((c) => `${arrow}<span class="t">${c}</span>`).join("") +
                `<svg class="ms-auto" width="29" height="20"><path d="m1 8 4 4 4-4" class="line" stroke="#666" stroke-width="1.800" /><path d="M13.500 0v20" stroke="#d9d9d9" /><path d="M25 6.500a4.300 4.300 0 1 1-5.500-.3M20 3.500v4h4" transform="translate(-.5 1)" class="line" stroke="#555" stroke-width="1.600" /></svg>`;
        </script>
    </body>
</html>
